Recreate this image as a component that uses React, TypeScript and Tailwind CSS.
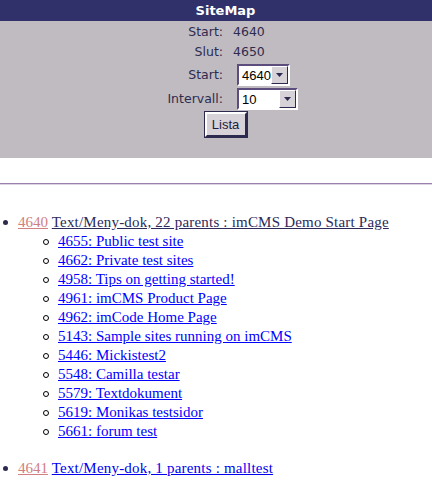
import React from 'react'

const children = [
  '4655: Public test site',
  '4662: Private test sites',
  '4958: Tips on getting started!',
  '4961: imCMS Product Page',
  '4962: imCode Home Page',
  '5143: Sample sites running on imCMS',
  '5446: Mickistest2',
  '5548: Camilla testar',
  '5579: Textdokument',
  '5619: Monikas testsidor',
  '5661: forum test',
]

function FakeSelect({ value, width }: { value: string; width: string }) {
  return (
    <div
      className={`${width} h-[22px] flex border-2 border-t-[#5c4d7c] border-l-[#5c4d7c] border-r-white border-b-white bg-white`}
    >
      <div className="flex-1 flex items-center pl-[3px] text-[13px] text-black leading-none font-['Liberation_Sans',sans-serif]">
        {value}
      </div>
      <div className="w-[17px] h-[18px] bg-[#d6d2d8] border border-t-white border-l-white border-r-[#2c2a4e] border-b-[#2c2a4e] flex items-center justify-center">
        <svg width="8" height="5" viewBox="0 0 8 5">
          <path d="M0 0h7L3.5 4z" fill="#2c2a4e" />
        </svg>
      </div>
    </div>
  )
}

export default function App() {
  return (
    <div className="w-[432px] h-[482px] overflow-hidden bg-white">
      <div className="h-[21px] bg-[#30306a] text-white font-bold text-[13px] flex items-center justify-center pl-[19px] font-['DejaVu_Sans',sans-serif]">
        SiteMap
      </div>

      <div className="h-[137px] bg-[#bfbbc1] pt-[1px] text-[#2e2b4f] text-[12.5px] font-['DejaVu_Sans',sans-serif]">
        <div className="grid grid-cols-[223px_1fr] items-center">
          <div className="h-[20px] flex items-center justify-end">Start:</div>
          <div className="h-[20px] flex items-center pl-[10px]">4640</div>
          <div className="h-[20px] flex items-center justify-end">Slut:</div>
          <div className="h-[20px] flex items-center pl-[10px]">4650</div>
          <div className="h-[24px] flex items-center justify-end pt-[2px]">Start:</div>
          <div className="h-[24px] pt-[2px] pl-[14px]">
            <FakeSelect value="4640" width="w-[53px]" />
          </div>
          <div className="h-[24px] flex items-center justify-end pt-[2px]">Intervall:</div>
          <div className="h-[24px] pt-[2px] pl-[14px]">
            <FakeSelect value="10" width="w-[61px]" />
          </div>
        </div>
        <div className="flex justify-center pl-[19px] mt-[2px]">
          <button className="h-[25px] w-[42px] bg-[#d6d2d8] border-2 border-t-white border-l-white border-r-[#2c2a4e] border-b-[#2c2a4e] outline outline-1 outline-[#2c2a4e] text-[13px] text-[#1e1c3e] leading-none font-['Liberation_Sans',sans-serif]">
            Lista
          </button>
        </div>
      </div>

      <div className="h-[25px]" />
      <div className="h-[1px] bg-[#9b80ab]" />
      <div className="h-[1px] bg-[#ddd3e3]" />

      <div className="pt-[28px] font-['Liberation_Serif',serif] text-[15px] leading-[19px]">
        <div className="flex items-center h-[19px]">
          <span className="w-[18px] flex justify-center pr-[8px]">
            <span className="block w-[5px] h-[5px] rounded-full bg-[#2c2a4e]" />
          </span>
          <span className="text-[#d08080] underline">4640</span>
          <span>&nbsp;</span>
          <span className="text-[#2c2a5a] underline tracking-[0.2px]">
            Text/Meny-dok, 22 parents : imCMS Demo Start Page
          </span>
        </div>
        <div>
          {children.map((c) => (
            <div key={c} className="flex items-center h-[19px] pl-[43px]">
              <span className="block w-[6px] h-[6px] rounded-full border border-black mr-[9px]" />
              <span className="text-[#0000ff] underline">{c}</span>
            </div>
          ))}
        </div>
        <div className="flex items-center h-[19px] mt-[18px]">
          <span className="w-[18px] flex justify-center pr-[8px]">
            <span className="block w-[5px] h-[5px] rounded-full bg-[#2c2a4e]" />
          </span>
          <span className="text-[#d08080] underline">4641</span>
          <span>&nbsp;</span>
          <span className="text-[#0000ee] underline tracking-[0.2px]">Text/Meny-dok, 1 parents : malltest</span>
        </div>
      </div>
    </div>
  )
}
